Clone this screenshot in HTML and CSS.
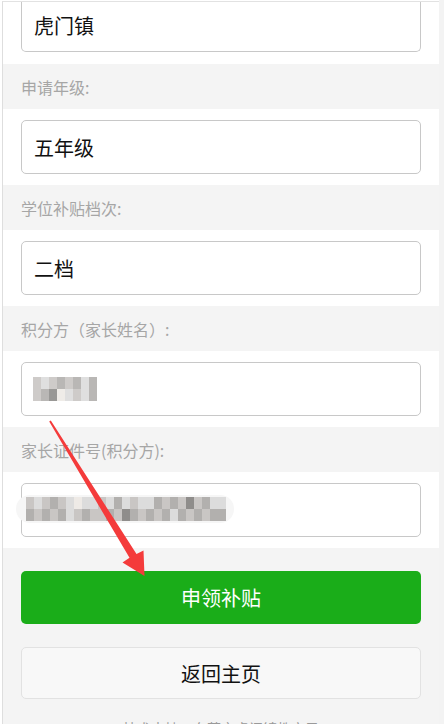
FILE: index.html
```html
<!DOCTYPE html>
<html lang="zh-CN">
<head>
<meta charset="utf-8">
<title>申领补贴</title>
<link rel="stylesheet" href="styles.css">
</head>
<body>
<div class="page">
  <div class="frame">
    <div class="cell cell-first">
      <div class="input"><span>虎门镇</span></div>
    </div>
    <div class="label">申请年级:</div>
    <div class="cell">
      <div class="input"><span>五年级</span></div>
    </div>
    <div class="label">学位补贴档次:</div>
    <div class="cell">
      <div class="input"><span>二档</span></div>
    </div>
    <div class="label">积分方（家长姓名）:</div>
    <div class="cell">
      <div class="input">
        <div class="mosaic mosaic-name">
          <i class="s3"></i><i class="s2"></i><i class="s3"></i><i class="s4"></i><i class="s3"></i><i class="s4"></i><i class="s2"></i><i class="s4"></i>
          <i class="s3"></i><i class="s4"></i><i class="s5"></i><i class="s1"></i><i class="s2"></i><i class="s3"></i><i class="s2"></i><i class="s4"></i>
        </div>
      </div>
    </div>
    <div class="label">家长证件号(积分方):</div>
    <div class="cell">
      <div class="input">
        <div class="pill">
          <div class="mosaic mosaic-id">
            <i class="s3"></i><i class="s2"></i><i class="s3"></i><i class="s4"></i><i class="s3"></i><i class="s2"></i><i class="s1"></i><i class="s2"></i><i class="s2"></i><i class="s3"></i><i class="s2"></i><i class="s4"></i><i class="s2"></i><i class="s3"></i><i class="s2"></i><i class="s2"></i><i class="s4"></i><i class="s3"></i><i class="s4"></i><i class="s3"></i><i class="s5"></i><i class="s3"></i><i class="s4"></i><i class="s2"></i><i class="s2"></i>
            <i class="s4"></i><i class="s3"></i><i class="s4"></i><i class="s3"></i><i class="s4"></i><i class="s2"></i><i class="s3"></i><i class="s4"></i><i class="s3"></i><i class="s3"></i><i class="s4"></i><i class="s3"></i><i class="s5"></i><i class="s4"></i><i class="s3"></i><i class="s4"></i><i class="s3"></i><i class="s4"></i><i class="s2"></i><i class="s4"></i><i class="s3"></i><i class="s4"></i><i class="s3"></i><i class="s4"></i><i class="s4"></i>
          </div>
        </div>
      </div>
    </div>
    <div class="actions">
      <div class="btn btn-primary">申领补贴</div>
      <div class="btn btn-default">返回主页</div>
      <p class="footnote">技术支持：东莞市虎门镇教育局</p>
    </div>
  </div>
  <div class="strip"></div>
</div>
<svg class="arrow" width="444" height="724" viewBox="0 0 444 724">
  <polygon points="49.2,421.6 50.8,420.4 136.5,554 143.5,550.5 144.5,576 122.5,562.5 129.5,557.8" fill="#f43b3b"/>
</svg>
</body>
</html>
```

FILE: styles.css
```css
* { box-sizing: border-box; }
html, body {
  margin: 0;
  padding: 0;
  height: 100%;
  overflow: hidden;
}
body {
  background: #ffffff;
  font-family: "Noto Sans CJK SC", "Noto Sans", sans-serif;
}
.page {
  display: flex;
  height: 724px;
  padding-left: 2px;
}
.frame {
  flex: 1;
  border-left: 1px solid #dedede;
  border-top: 1px solid #e2e2e2;
  margin-top: 1px;
  overflow: hidden;
  background: #f4f4f4;
}
.strip {
  width: 5px;
  background: #f3f3f3;
}
.cell {
  background: #ffffff;
  padding: 11px 18px;
}
.cell-first {
  padding-top: 0;
  padding-bottom: 12px;
}
.cell-first .input {
  border-top: none;
  border-top-left-radius: 0;
  border-top-right-radius: 0;
  height: 50px;
  align-items: flex-start;
  padding-top: 9px;
}
.input {
  height: 54px;
  border: 1px solid #c8c8c8;
  border-radius: 5px;
  background: #fff;
  display: flex;
  align-items: center;
  padding-left: 12px;
  font-size: 20px;
  color: #111;
  position: relative;
}
.label {
  height: 45px;
  padding-left: 18px;
  display: flex;
  align-items: center;
  font-size: 16px;
  color: #a6a6a6;
  background: #f4f4f4;
}
.mosaic {
  display: grid;
  grid-auto-rows: 12px;
}
.mosaic i { display: block; }
.mosaic-name {
  grid-template-columns: repeat(8, 8px);
  margin-left: -1px;
  opacity: 0.9;
}
.pill {
  position: absolute;
  left: -6px;
  top: 11px;
  width: 218px;
  height: 28px;
  border-radius: 14px;
  background: #f6f6f6;
  display: flex;
  align-items: center;
  padding-left: 10px;
}
.mosaic-id {
  grid-template-columns: repeat(25, 8px);
}
.s1 { background: #eeeae6; }
.s2 { background: #dcdcdc; }
.s3 { background: #c9c6c4; }
.s4 { background: #b2b0ae; }
.s5 { background: #8f8d8b; }
.actions {
  background: #f4f4f4;
  padding: 23px 18px 0;
  display: flex;
  flex-direction: column;
}
.btn {
  border-radius: 5px;
  display: flex;
  align-items: center;
  justify-content: center;
  font-size: 20px;
}
.btn-primary {
  height: 53px;
  background: #1aad19;
  color: #ffffff;
}
.btn-default {
  margin-top: 23px;
  height: 52px;
  background: #f8f8f8;
  border: 1px solid #e2e2e2;
  color: #111;
}
.footnote {
  margin: 19px 0 0;
  text-align: center;
  font-size: 14px;
  color: #9a9a9a;
}
.arrow {
  position: absolute;
  left: 0;
  top: 0;
  pointer-events: none;
}
```
